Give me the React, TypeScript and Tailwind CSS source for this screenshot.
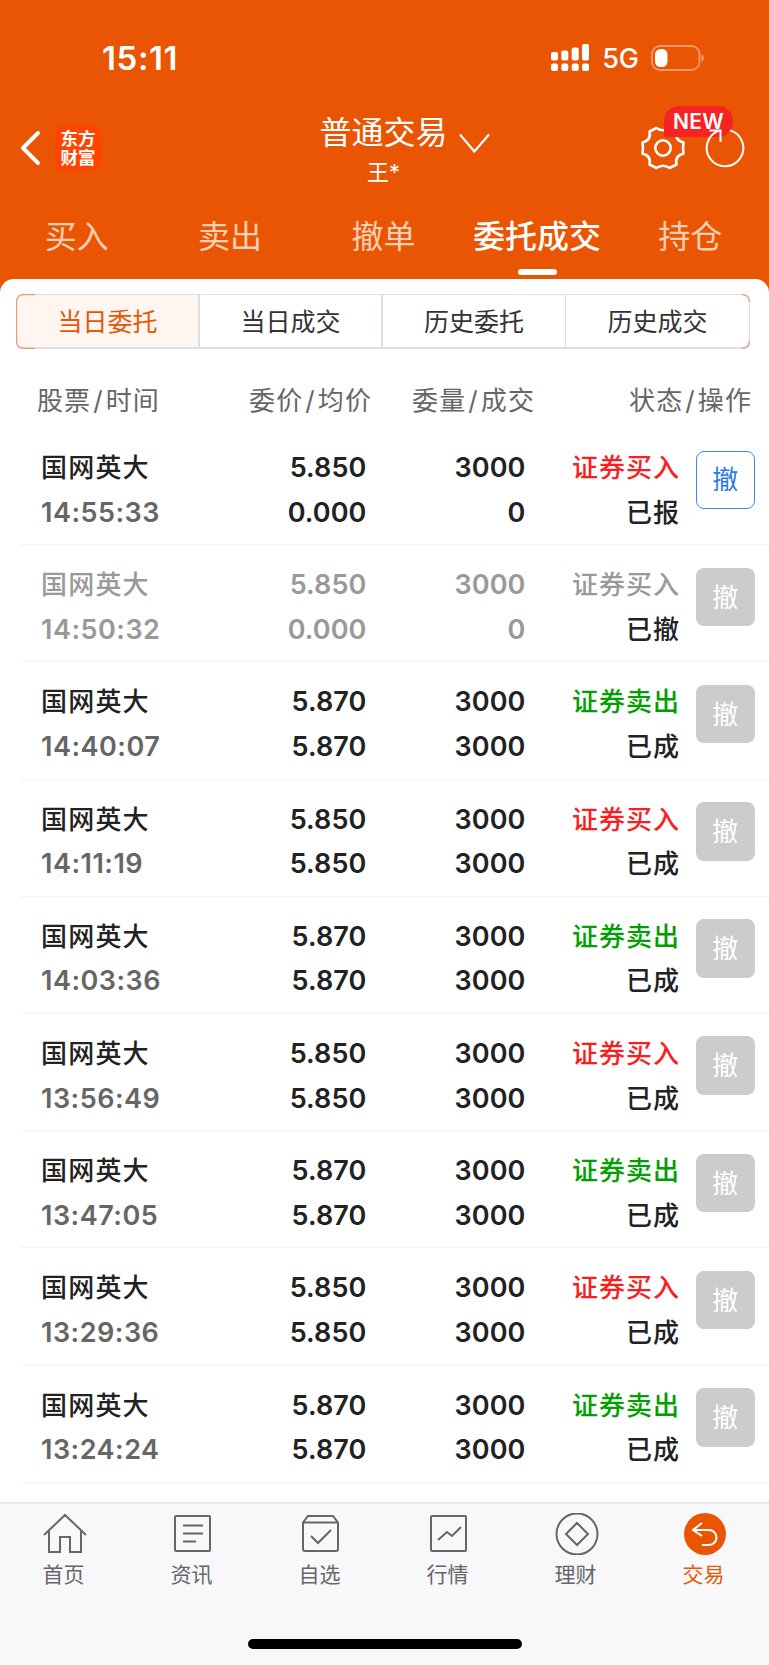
import React from 'react';
import clsx from 'clsx';

type Order = {
  time: string;
  price: string;
  avg: string;
  filled: string;
  side: 'buy' | 'sell';
  state: string;
};

const orders: Order[] = [
  { time: '14:55:33', price: '5.850', avg: '0.000', filled: '0', side: 'buy', state: '已报' },
  { time: '14:50:32', price: '5.850', avg: '0.000', filled: '0', side: 'buy', state: '已撤' },
  { time: '14:40:07', price: '5.870', avg: '5.870', filled: '3000', side: 'sell', state: '已成' },
  { time: '14:11:19', price: '5.850', avg: '5.850', filled: '3000', side: 'buy', state: '已成' },
  { time: '14:03:36', price: '5.870', avg: '5.870', filled: '3000', side: 'sell', state: '已成' },
  { time: '13:56:49', price: '5.850', avg: '5.850', filled: '3000', side: 'buy', state: '已成' },
  { time: '13:47:05', price: '5.870', avg: '5.870', filled: '3000', side: 'sell', state: '已成' },
  { time: '13:29:36', price: '5.850', avg: '5.850', filled: '3000', side: 'buy', state: '已成' },
  { time: '13:24:24', price: '5.870', avg: '5.870', filled: '3000', side: 'sell', state: '已成' },
];

const tabs = ['买入', '卖出', '撤单', '委托成交', '持仓'];
const segments = ['当日委托', '当日成交', '历史委托', '历史成交'];

// --- STATUS BAR ---

const StatusBar = () => (
  <div className="flex h-[116px] items-center justify-between pl-[102px] pr-[63px] text-white">
    <span className="pt-[2px] text-[33px] font-semibold tracking-[0.600px]">15:11</span>
    <div className="flex items-center">
      <svg width="39" height="28" viewBox="0 0 39 28" fill="#fff">
        <rect x="0" y="8" width="7" height="8.500" rx="2" />
        <rect x="10.3" y="6.500" width="7" height="10" rx="2" />
        <rect x="20.7" y="3.500" width="7" height="13" rx="2" />
        <rect x="31" y="0" width="7" height="16.500" rx="2" />
        {[0, 10.3, 20.7, 31].map(x => (
          <rect key={x} x={x} y="19.500" width="7" height="7.5" rx="2" />
        ))}
      </svg>
      <span className="ml-3 pt-[2px] text-[27px] font-medium">5G</span>
      <svg className="ml-3" width="55" height="26" viewBox="0 0 55 26" fill="none">
        <rect x="1" y="1" width="47.5" height="24" rx="8" stroke="#fff" strokeOpacity="0.4" strokeWidth="1.8" />
        <rect x="4" y="4" width="12.5" height="18" rx="5.5" fill="#fff" />
        <path d="M50.5 9.5c3 .8 3 6.200 0 7z" fill="#fff" fillOpacity="0.45" />
      </svg>
    </div>
  </div>
);

// --- HEADER ---

const TitleBar = () => (
  <div className="flex h-[80px] items-start justify-between">
    <div className="flex w-[220px] items-center pl-[19px] pt-[9px]">
      <svg width="22" height="36" viewBox="0 0 22 36" fill="none" stroke="#fff" strokeWidth="4" strokeLinecap="round" strokeLinejoin="round">
        <path d="M19 3 4 18l15 15" />
      </svg>
      <div className="ml-[14px] flex size-[46px] flex-col items-center justify-center rounded-[9px] bg-[#ff4400] text-[17.500px] leading-[19px] font-bold text-white">
        <span>东方</span>
        <span>财富</span>
      </div>
    </div>
    <div className="flex flex-col items-center text-white">
      <div className="flex h-[42px] items-start">
        <span className="text-[32px] leading-[34px]">普通交易</span>
        <svg className="ml-[11px] mt-[17px]" width="31" height="21" viewBox="0 0 31 21" fill="none" stroke="#fff" strokeWidth="2.2">
          <path d="M1 1.500 15.300 18.500 30 1.500" />
        </svg>
      </div>
      <span className="-ml-[42px] text-[22px] leading-[28px]">王*</span>
    </div>
    <div className="relative flex w-[180px] justify-end gap-[19px] pr-[24px] pt-[9px]">
      <svg className="shrink-0" width="46" height="46" viewBox="-23 -23 46 46" fill="none" stroke="#fff" strokeWidth="2.600" strokeLinejoin="round">
        <circle r="7.700" />
        <path d="M-6.500-20Q0-15.500 6.500-20L13.500-16.500Q11.500-8 20.500-5.500Q19.500 0 20.500 5.500Q11.500 8 13.500 16.500L6.500 20Q0 15.500-6.500 20L-13.500 16.500Q-11.500 8-20.500 5.500Q-19.500 0-20.500-5.500Q-11.500-8-13.500-16.500Z" />
      </svg>
      <div className="absolute right-[36px] top-[-10px] flex h-[31px] w-[69px] items-center justify-center rounded-[15px] rounded-bl-none bg-[#f52323] text-[21px] font-semibold tracking-[0.300px] text-white">
        NEW
      </div>
      <svg className="relative shrink-0" width="40" height="46" viewBox="0 0 40 46" fill="none" stroke="#fff" strokeWidth="2">
        <path d="M25 5.400A18.300 18.300 0 1 1 13.500 5.900M4.500 5.500h11V17" />
      </svg>
    </div>
  </div>
);

const TradeTabs = () => (
  <nav className="grid h-[83px] w-[767px] grid-cols-5 text-center text-[32px]">
    {tabs.map(tab => {
      const active = tab === '委托成交';
      return (
        <div key={tab} className={clsx('flex flex-col items-center pt-[17px]', active ? 'font-medium text-white' : 'text-[#fbd0b5]')}>
          <span className="leading-[48px] whitespace-nowrap">{tab}</span>
          {active && <div className="ml-[2px] mt-[8px] h-[6px] w-[39px] rounded-full bg-white" />}
        </div>
      );
    })}
  </nav>
);

// --- ORDER LIST ---

const Segments = () => (
  <div className="relative mr-[19px] ml-[16px] mt-[15px]">
    <div className="grid h-[55px] grid-cols-4 overflow-hidden rounded-lg border-[1.500px] border-b-2 border-[#dcdfe4] text-[25px] text-[#333]">
      {segments.map((s, i) => (
        <div
          key={s}
          className={clsx(
            'flex items-center justify-center pt-[4px]',
            i === 0 && 'bg-[#fff5f1] text-[#ea5504]',
            i < 2 && 'border-r-2 border-[#dcdfe4]',
            i === 2 && 'border-r border-[#dcdfe4]',
          )}
        >
          {s}
        </div>
      ))}
    </div>
    {/* orange accents on the rounded ends */}
    <svg className="absolute left-0 top-0" width="20" height="55" viewBox="0 0 20 55" fill="none" stroke="#eb9a72" strokeWidth="1.200">
      <path d="M19 .6H8Q.6.6.6 8v39q0 7.400 7.400 7.400h11" />
    </svg>
    <svg className="absolute right-0 top-0" width="9" height="55" viewBox="0 0 9 55" fill="none" stroke="#eb9a72" strokeWidth="1.200">
      <path d="M1 .6q7.400 0 7.400 7.400M8.400 47q0 7.400-7.400 7.400" />
    </svg>
  </div>
);

const HeadCell = ({ a, b, className }: { a: string; b: string; className: string }) => (
  <span className={className}>
    {a}
    <span className="mx-[2px]">/</span>
    {b}
  </span>
);

const OrderRow = ({ order }: { order: Order }) => {
  const cancelled = order.state === '已撤';
  const open = order.state === '已报';
  const side = order.side === 'buy' ? 'text-[#fa1e1e]' : 'text-[#00a000]';

  return (
    <div className="ml-5 flex h-[117.200px] border-b-[1.500px] border-[#f3f3f3] pt-[18px] text-[26px] leading-[44.700px] font-medium tracking-[1px]">
      <div className={clsx('w-[170px] pl-[21px]', cancelled ? 'text-[#999]' : 'text-[#222]')}>
        <div className="tracking-[1.200px]">国网英大</div>
        <div className={clsx('text-[27px] font-semibold tracking-[0.500px]', cancelled ? 'text-[#999]' : 'text-[#666]')}>{order.time}</div>
      </div>
      <div className={clsx('w-[176.500px] text-right text-[27px] font-semibold tracking-[0.100px]', cancelled ? 'text-[#999]' : 'text-[#222]')}>
        <div>{order.price}</div>
        <div>{order.avg}</div>
      </div>
      <div className={clsx('w-[159px] text-right text-[27px] font-semibold tracking-[0.100px]', cancelled ? 'text-[#999]' : 'text-[#222]')}>
        <div>3000</div>
        <div>{order.filled}</div>
      </div>
      <div className="w-[154.500px] text-right text-[#222]">
        <div className={cancelled ? 'text-[#999]' : side}>{order.side === 'buy' ? '证券买入' : '证券卖出'}</div>
        <div>{order.state}</div>
      </div>
      <button
        className={clsx(
          'ml-4 mt-[4.500px] size-[58.500px] rounded-lg pt-[2px] text-[26px] font-normal tracking-normal',
          open ? 'border-[1.500px] border-[#3b88ea] text-[#2b7de6]' : 'bg-[#ccc] text-white',
        )}
      >
        撤
      </button>
    </div>
  );
};

// --- BOTTOM NAV ---

const navItems = [
  {
    label: '首页',
    icon: <path d="M1 22 22 2l21 20M6 18v21h11V24h10v15h11V18" />,
  },
  {
    label: '资讯',
    icon: <path d="M6 3h32q1 0 1 1v33q0 1-1 1H5q-1 0-1-1V4q0-1 1-1zM12 12.500h20M12 20.500h20M12 28.500h13" />,
  },
  {
    label: '自选',
    icon: <path d="M9 3h25l5 6.500V36q0 2-2 2H6q-2 0-2-2V9.500zM4 9.500h35M12 23l7 7 13-13" />,
  },
  {
    label: '行情',
    icon: <path d="M6 3h32q1 0 1 1v33q0 1-1 1H5q-1 0-1-1V4q0-1 1-1zM11 27l9-8 5 4 9-9" />,
  },
  {
    label: '理财',
    icon: (
      <>
        <circle cx="22" cy="21" r="20.500" />
        <path d="M22 10 33 21 22 32 11 21z" />
      </>
    ),
  },
  {
    label: '交易',
    icon: (
      <>
        <circle cx="22" cy="21" r="21" fill="#ea5504" stroke="none" />
        <path d="M19 10 10 17l9 6M10 17h16a7.500 7.500 0 0 1 0 15h-7" stroke="#fff" />
      </>
    ),
  },
];

const BottomNav = () => (
  <footer className="flex h-[163px] flex-col items-center border-t-2 border-[#e8e8ea] bg-[#f8f8fb]">
    <div className="grid w-[768px] grid-cols-6">
      {navItems.map(item => (
        <div key={item.label} className={clsx('flex flex-col items-center pt-[9px] text-[21px]', item.label === '交易' ? 'text-[#ea5504]' : 'text-[#666]')}>
          <svg width="44" height="42" viewBox="0 0 44 42" fill="none" stroke="currentColor" strokeWidth="2">
            {item.icon}
          </svg>
          <span className="mt-[4px] -ml-[2px] leading-[32px]">{item.label}</span>
        </div>
      ))}
    </div>
    <div className="mt-[48px] h-[10px] w-[274px] rounded-full bg-black" />
  </footer>
);

function App() {
  return (
    <div className="flex h-[1665px] w-[769px] flex-col overflow-hidden bg-[#ea5504] font-[Inter,'Noto_Sans_CJK_SC',sans-serif]">
      <StatusBar />
      <TitleBar />
      <TradeTabs />
      <main className="flex-1 overflow-hidden rounded-t-[14px] bg-white">
        <Segments />
        <div className="flex h-[79px] items-center pl-[37px] pt-[23px] text-[26px] tracking-[1.100px] text-[#666]">
          <HeadCell className="w-[136px]" a="股票" b="时间" />
          <HeadCell className="w-[199px] text-right" a="委价" b="均价" />
          <HeadCell className="w-[163px] text-right" a="委量" b="成交" />
          <HeadCell className="w-[217px] text-right" a="状态" b="操作" />
        </div>
        {orders.map(o => (
          <OrderRow key={o.time} order={o} />
        ))}
      </main>
      <BottomNav />
    </div>
  );
}

export default App;
